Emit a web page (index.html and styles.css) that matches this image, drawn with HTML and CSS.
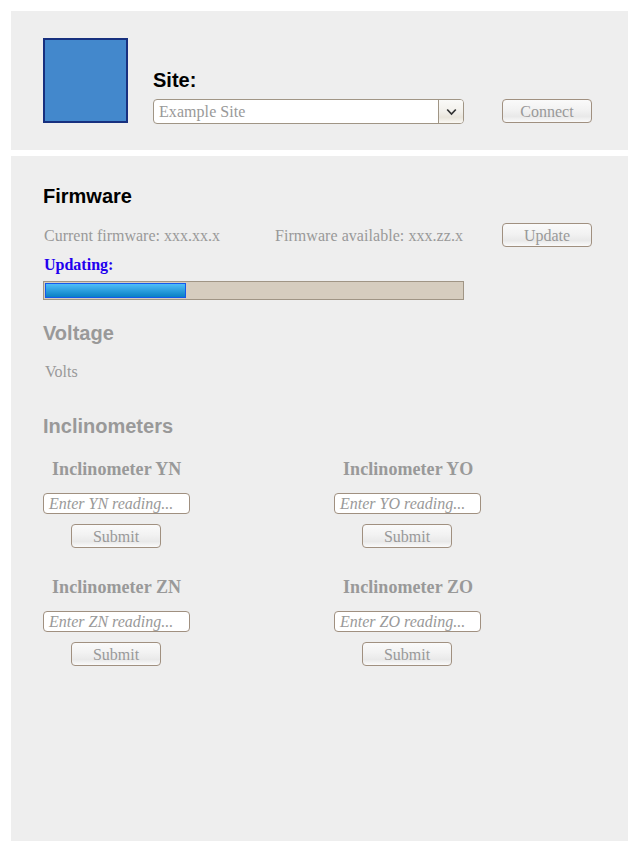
FILE: index.html
```html
<!DOCTYPE html>
<html lang="en">
<head>
<meta charset="utf-8">
<title>Site configuration</title>
<link rel="stylesheet" href="styles.css">
</head>
<body>
<section class="panel site-panel">
  <div class="site-image"></div>
  <div class="site-field">
    <h2>Site:</h2>
    <div class="combo">
      <span class="combo-value">Example Site</span>
      <span class="combo-arrow"><svg width="11" height="8" viewBox="0 0 11 8"><path d="M1.2 1.5L5.5 6L9.8 1.5" fill="none" stroke="#333" stroke-width="1.7"/></svg></span>
    </div>
  </div>
  <button class="btn">Connect</button>
</section>
<section class="panel device-panel">
  <h2>Firmware</h2>
  <div class="firmware-row">
    <span class="current">Current firmware: xxx.xx.x</span>
    <span class="available">Firmware available: xxx.zz.x</span>
    <button class="btn">Update</button>
  </div>
  <div class="updating">Updating:</div>
  <div class="progress"><div class="progress-fill"></div></div>
  <h2 class="muted voltage">Voltage</h2>
  <div class="volts">Volts</div>
  <h2 class="muted inclinometers">Inclinometers</h2>
  <div class="readings">
    <div class="reading"><h3>Inclinometer YN</h3><div class="entry">Enter YN reading...</div><button class="btn">Submit</button></div>
    <div class="reading"><h3>Inclinometer YO</h3><div class="entry">Enter YO reading...</div><button class="btn">Submit</button></div>
    <div class="reading"><h3>Inclinometer ZN</h3><div class="entry">Enter ZN reading...</div><button class="btn">Submit</button></div>
    <div class="reading"><h3>Inclinometer ZO</h3><div class="entry">Enter ZO reading...</div><button class="btn">Submit</button></div>
  </div>
</section>
</body>
</html>
```
FILE: styles.css
```css
* { box-sizing: border-box; }
body {
  margin: 0;
  padding: 11px;
  background: #fff;
  color: #999;
  font: 16px/20px "Liberation Serif", serif;
  white-space: nowrap;
}
.panel { width: 617px; background: #eee; padding-left: 32px; }
h2 {
  margin: 0;
  color: #000;
  font: bold 20px/24px "Liberation Sans", sans-serif;
}
h2.muted { color: #999; }
.btn {
  display: block;
  width: 90px;
  height: 24px;
  padding: 2px 0 0;
  border: 1px solid #a09080;
  border-radius: 4px;
  background: linear-gradient(#fafafa, #f2f2f2 45%, #e9e9e9 75%, #fafafa);
  color: #999;
  font: 16px/20px "Liberation Serif", serif;
  text-align: center;
}
.site-panel { display: flex; height: 139px; padding-top: 27px; }
.site-image {
  width: 85px;
  height: 85px;
  margin-right: 25px;
  border: 2px solid #17307f;
  background: #4388cc;
}
.site-field { width: 311px; padding-top: 30px; margin-right: 38px; }
.combo {
  display: flex;
  height: 25px;
  margin-top: 7px;
  border: 1px solid #a09585;
  border-radius: 4px;
  background: #fff;
  overflow: hidden;
}
.combo-value { flex: 1; padding: 2px 5px; letter-spacing: 0.06px; }
.combo-arrow {
  display: flex;
  align-items: center;
  justify-content: center;
  width: 25px;
  border-left: 1px solid #a09585;
  background: linear-gradient(#fafaf8, #f2f0eb 50%, #e9e5dc 75%, #faf8f3);
}
.site-panel .btn { margin-top: 61px; }
.device-panel { height: 685px; margin-top: 6px; padding-top: 28px; }
.firmware-row { display: flex; height: 24px; margin-top: 15px; }
.firmware-row span { padding-top: 3px; }
.current { width: 232px; padding-left: 1px; }
.available { width: 227px; letter-spacing: 0.05px; }
.updating { margin-top: 8px; padding-left: 1px; color: #2200ee; font-weight: bold; }
.progress {
  width: 421px;
  height: 19px;
  margin-top: 6px;
  padding: 1px;
  border: 1px solid #a09585;
  background: #d6cdbf;
}
.progress-fill {
  width: 141px;
  height: 15px;
  border: 1px solid #1459ed;
  background: linear-gradient(#4fbdf8, #0a80c4);
}
.voltage { margin-top: 21px; }
.volts { margin-top: 17px; padding-left: 2px; }
.inclinometers { margin-top: 32px; }
.readings {
  display: grid;
  grid-template-columns: 291px 147px;
  grid-auto-rows: 118px;
  margin-top: 20px;
}
.reading { width: 147px; }
h3 { margin: 0; padding-left: 9px; font-size: 18px; line-height: 22px; letter-spacing: 0.06px; }
.entry {
  height: 21px;
  margin-top: 13px;
  padding-left: 5px;
  border: 1px solid #a09080;
  border-radius: 4px;
  background: #fff;
  line-height: 20px;
  font-style: italic;
}
.reading .btn { margin: 10px 0 0 28px; }
```
